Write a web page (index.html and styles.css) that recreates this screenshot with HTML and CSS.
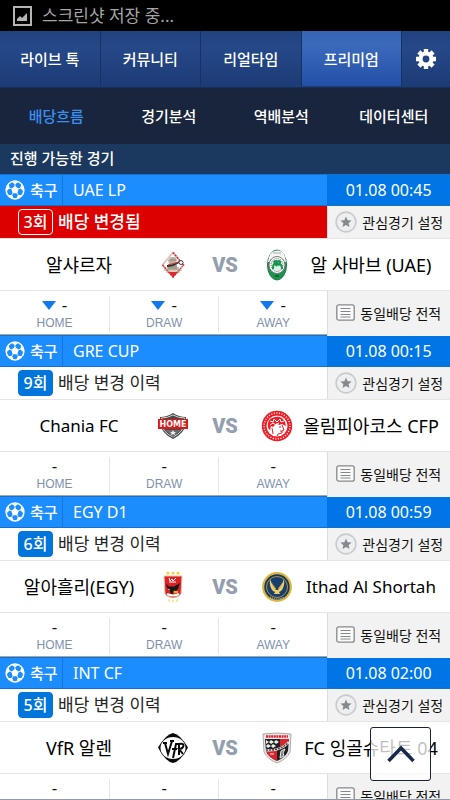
FILE: index.html
```html
<!DOCTYPE html>
<html lang="ko">
<head>
<meta charset="utf-8">
<meta name="viewport" content="width=device-width, initial-scale=1">
<title>배당흐름</title>
<link rel="stylesheet" href="styles.css">
</head>
<body>
<svg class="defs" aria-hidden="true">
  <symbol id="ball" viewBox="0 0 20 20">
    <circle cx="10" cy="10" r="8.9" fill="none" stroke="#fff" stroke-width="1.5"/>
    <path fill="#fff" d="M10 6.1l3.7 2.7-1.4 4.4H7.7L6.3 8.800zM6.300 1.800h7.400L10 4.300zM1 8.700l2.700-4.500 1 4.100-2.800 2.600zM19 8.700l-2.700-4.500-1 4.100 2.800 2.600zM3.200 14.900l4 .1 1.500 3.900-3.100-1zM16.800 14.900l-4 .1-1.500 3.900 3.100-1z"/>
    <path stroke="#fff" stroke-width=".9" d="M10 7V3.500M6.800 9L4 7.800M13.200 9L16 7.800M8 13l-1.500 2.500M12 13l1.500 2.500"/>
  </symbol>
  <symbol id="star" viewBox="0 0 22 22">
    <circle cx="11" cy="11" r="9.900" fill="#eeeff0" stroke="#c9cbcd" stroke-width="1.600"/>
    <path fill="#858990" d="M11 5.500l1.600 3.700 4 .4-3 2.600.9 3.900-3.500-2-3.500 2 .9-3.900-3-2.600 4-.4z"/>
  </symbol>
  <symbol id="list" viewBox="0 0 19 17">
    <rect x=".8" y=".8" width="17.400" height="15.400" rx="2" fill="#fafafa" stroke="#85888b" stroke-width="1.300"/>
    <path stroke="#85888b" d="M4.500 4.500h10M4.500 7.500h10M4.500 10.500h10M4.500 13h10"/>
  </symbol>
</svg>
<div class="app">
  <div class="status-bar">
    <svg width="19" height="20" viewBox="0 0 19 20"><rect x="1" y="1" width="17" height="18" fill="none" stroke="#b5b5b5" stroke-width="2"/><path fill="#b5b5b5" d="M4 15v-2l3-3 2 2 5-5v8z"/></svg>
    <span>스크린샷 저장 중...</span>
  </div>
  <nav class="main-nav">
    <a href="#">라이브 톡</a>
    <a href="#">커뮤니티</a>
    <a href="#">리얼타임</a>
    <a href="#" class="active">프리미엄</a>
    <button type="button" aria-label="설정">
      <svg width="20" height="20" viewBox="0 0 20 20"><circle cx="10" cy="10" r="5.500" fill="none" stroke="#fff" stroke-width="4.200"/><path stroke="#fff" stroke-width="4.400" d="M10 0v4M10 16v4M0 10h4M16 10h4M2.900 2.900l2.900 2.900M14.200 14.200l2.900 2.900M2.900 17.100l2.900-2.900M14.200 5.800l2.900-2.900"/></svg>
    </button>
  </nav>
  <nav class="sub-nav">
    <a href="#" class="active">배당흐름</a>
    <a href="#">경기분석</a>
    <a href="#">역배분석</a>
    <a href="#">데이터센터</a>
  </nav>
  <h1 class="section-title">진행 가능한 경기</h1>
  <main class="matches">

    <article class="match">
      <header class="split head">
        <div class="league"><span class="sport"><svg width="20" height="20"><use href="#ball"/></svg>축구</span><span>UAE LP</span></div>
        <time>01.08 00:45</time>
      </header>
      <div class="split change">
        <a href="#" class="history alert"><b>3회</b><span>배당 변경됨</span></a>
        <button type="button" class="side"><svg width="22" height="22"><use href="#star"/></svg>관심경기 설정</button>
      </div>
      <div class="teams">
        <span>알샤르자</span>
        <svg width="30" height="32" viewBox="0 0 30 32">
          <path d="M15 3.500L25.500 16 15 28 4.500 16z" fill="#fff" stroke="#ddb8b8" stroke-width="1.500"/>
          <path d="M15 3.500L25.500 16 24 18M4.500 16L15 28l8-9" fill="none" stroke="#dc2932" stroke-width="1.600" stroke-dasharray="2 1"/>
          <path d="M13 8h4l2 3-1 3 2 7H9l2-6-1-4z" fill="#b9b4a4"/>
          <path d="M12 11h6M10 17h9M9 19h12" stroke="#8c8776"/>
          <path d="M9 17q6 0 12-4" fill="none" stroke="#333" stroke-width="2"/><path d="M10 16l11-3" stroke="#c33"/>
          <path d="M6 21h18M8 23h14" stroke="#b59b83"/><path d="M10 23l5 5 5-5" fill="#dc2932"/>
          <circle cx="23" cy="13.500" r="2" fill="#fff" stroke="#444"/>
        </svg>
        <strong>VS</strong>
        <svg width="30" height="32" viewBox="0 0 30 32">
          <ellipse cx="15" cy="16" rx="9.500" ry="15" fill="#19954b" stroke="#24764a"/>
          <path d="M6 13Q7 2 15 1.500T24 13z" fill="#f6f8f6"/>
          <path d="M11 4h8" stroke="#aaa"/><ellipse cx="15" cy="16" rx="8" ry="8.500" fill="#fff" stroke="#777"/>
          <ellipse cx="15" cy="16" rx="6" ry="6.500" fill="#ddeee4" stroke="#777" stroke-dasharray="1 1"/>
          <path d="M11 20q0-8 4-3-5-5-1-5 1 0 1 4 0-4 2-4 3 1-1 4 4-2 4 4" fill="none" stroke="#17934a" stroke-width="2"/><path d="M13 27h4" stroke="#116332" stroke-width="2"/>
        </svg>
        <span>알 사바브 (UAE)</span>
      </div>
      <div class="split bottom">
        <dl class="odds">
          <div><dd><i class="down"></i>-</dd><dt>HOME</dt></div>
          <div><dd><i class="down"></i>-</dd><dt>DRAW</dt></div>
          <div><dd><i class="down"></i>-</dd><dt>AWAY</dt></div>
        </dl>
        <button type="button" class="side"><svg width="19" height="17"><use href="#list"/></svg>동일배당 전적</button>
      </div>
    </article>

    <article class="match">
      <header class="split head">
        <div class="league"><span class="sport"><svg width="20" height="20"><use href="#ball"/></svg>축구</span><span>GRE CUP</span></div>
        <time>01.08 00:15</time>
      </header>
      <div class="split change">
        <a href="#" class="history"><b>9회</b><span>배당 변경 이력</span></a>
        <button type="button" class="side"><svg width="22" height="22"><use href="#star"/></svg>관심경기 설정</button>
      </div>
      <div class="teams">
        <span class="latin">Chania FC</span>
        <svg width="30" height="32" viewBox="0 0 30 32">
          <path d="M2 7q7 0 13-4 6 4 13 4v6q-1 10-13 16Q3 23 2 13z" fill="#454a4d"/>
          <path d="M3.500 8q6 0 11.500-3Q20.500 8 26.500 8v5q-1 9-11.500 14Q4 22 3.500 13z" fill="none" stroke="#d2d4d5"/>
          <path d="M7 20h16l-8 7z" fill="#686d70"/><path d="M15 20l1 2h2l-1.500 1.300.5 2-2-1.200-2 1.200.5-2L12 22h2z" fill="#eee"/>
          <path d="M0 9h30v10H0z" fill="#df1717"/>
          <text x="15" y="17" text-anchor="middle" class="home-logo">HOME</text>
        </svg>
        <strong>VS</strong>
        <svg width="32" height="32" viewBox="0 0 32 32">
          <circle cx="16" cy="16" r="15.200" fill="#f01c24"/>
          <circle cx="16" cy="16" r="12.900" fill="none" stroke="#fff" stroke-width="1.500" stroke-dasharray="1 1.600"/>
          <circle cx="16" cy="16" r="10.500" fill="#fff"/>
          <path d="M7 17q-1-7 4-9 9-4 13 4l1 4-4-2-3 1-2-2-4 4-2-1-1 4q-2-1-2-3z" fill="#f01c24"/>
          <path d="M9 11l3 1 1-3 3 3 3-3 1 3 3-1M9 15l3-2 3 2 3-2" fill="none" stroke="#fff"/>
          <path d="M21 15l2 5-2 1v2l-4 1-1 2M11 18l1 6M18 17h2M19 21h2" fill="none" stroke="#f01c24"/>
        </svg>
        <span>올림피아코스 CFP</span>
      </div>
      <div class="split bottom">
        <dl class="odds">
          <div><dd>-</dd><dt>HOME</dt></div>
          <div><dd>-</dd><dt>DRAW</dt></div>
          <div><dd>-</dd><dt>AWAY</dt></div>
        </dl>
        <button type="button" class="side"><svg width="19" height="17"><use href="#list"/></svg>동일배당 전적</button>
      </div>
    </article>

    <article class="match">
      <header class="split head">
        <div class="league"><span class="sport"><svg width="20" height="20"><use href="#ball"/></svg>축구</span><span>EGY D1</span></div>
        <time>01.08 00:59</time>
      </header>
      <div class="split change">
        <a href="#" class="history"><b>6회</b><span>배당 변경 이력</span></a>
        <button type="button" class="side"><svg width="22" height="22"><use href="#star"/></svg>관심경기 설정</button>
      </div>
      <div class="teams">
        <span>알아흘리(EGY)</span>
        <svg width="30" height="32" viewBox="0 0 30 32">
          <path d="M10 0l.7 1.500h1.500L11 2.500l.5 1.500-1.500-1-1.500 1L9 2.500 7.800 1.500h1.500zM15 0l.7 1.500h1.500L16 2.500l.5 1.500-1.500-1-1.500 1 .5-1.500-1.200-1h1.500zM20 0l.7 1.500h1.500L21 2.500l.5 1.500-1.500-1-1.500 1 .5-1.500-1.200-1h1.500z" fill="#f5c928"/>
          <path d="M6 5h18l-1 18q-2 3-8 4-6-1-8-4z" fill="#dd2025" stroke="#dfc6a3"/>
          <path d="M11 7l1 3 2-2 1 2 3-3M11 11h7" fill="none" stroke="#fff"/>
          <path d="M8 13l4 3 2-1 1 1 7-4-2 6-4 4-3 1-1-3q-3-2-4-7z" fill="#17171b"/><path d="M16 20l4 1-4 1zM10 18l2 1" fill="#edb729" stroke="#edb729"/>
          <path d="M9 23q6 3 12 0" stroke="#fff" stroke-width="2" fill="none"/><path d="M10 29l2 1M14 30h2M18 30l2-1" stroke="#f8e58a" stroke-width="2"/>
        </svg>
        <strong>VS</strong>
        <svg width="30" height="32" viewBox="0 0 30 32">
          <circle cx="15" cy="16" r="13.800" fill="#163763" stroke="#dfb53a" stroke-width="2.200"/>
          <circle cx="15" cy="16" r="10.500" fill="#173d71" stroke="#a99245"/>
          <path d="M8 8q1 4 4 7 2 2 2 4h2q0-2 2-4 3-3 4-7 1 8-3 12l-2 1 1 2h-6l1-2-2-1Q7 16 8 8z" fill="#edcf65"/>
          <path d="M10 12q1 4 4 7M20 12q-1 4-4 7" fill="none" stroke="#a8842c" stroke-width=".6"/>
          <path d="M8 26q7 4 14 0" fill="none" stroke="#e9e4c8" stroke-dasharray="1 1"/>
        </svg>
        <span class="latin">Ithad Al Shortah</span>
      </div>
      <div class="split bottom">
        <dl class="odds">
          <div><dd>-</dd><dt>HOME</dt></div>
          <div><dd>-</dd><dt>DRAW</dt></div>
          <div><dd>-</dd><dt>AWAY</dt></div>
        </dl>
        <button type="button" class="side"><svg width="19" height="17"><use href="#list"/></svg>동일배당 전적</button>
      </div>
    </article>

    <article class="match">
      <header class="split head">
        <div class="league"><span class="sport"><svg width="20" height="20"><use href="#ball"/></svg>축구</span><span>INT CF</span></div>
        <time>01.08 02:00</time>
      </header>
      <div class="split change">
        <a href="#" class="history"><b>5회</b><span>배당 변경 이력</span></a>
        <button type="button" class="side"><svg width="22" height="22"><use href="#star"/></svg>관심경기 설정</button>
      </div>
      <div class="teams">
        <span>VfR 알렌</span>
        <svg width="30" height="32" viewBox="0 0 30 32">
          <path d="M15 1q4 1 7 4 5 5 8 10.500Q27 22 22 27q-3 3-7 4-4-1-7-4-5-5-8-11.500Q3 10 8 5q3-3 7-4z" fill="#090909"/>
          <ellipse cx="15" cy="16" rx="12.500" ry="11" fill="#fff"/>
          <path d="M5 11h4M7 11l3 11 4-13M12 9h4M21 12h-3l-3 14M14 17h5M21 23V12q6-1 4 3-1 2-4 2l4 5" fill="none" stroke="#090909" stroke-width="2"/>
        </svg>
        <strong>VS</strong>
        <svg width="30" height="32" viewBox="0 0 30 32">
          <path d="M1 2q14-2 28 0l-1 18q-3 7-13 11Q5 27 2 20z" fill="#e8e8e8" stroke="#aaa"/>
          <path d="M3 7h24l-1 12q-2 6-11 10Q6 25 4 19z" fill="#202022"/>
          <path d="M4 19l11-3v13Q6 25 4 19zM18 7h9l-1 5-8 5z" fill="#d9242c"/>
          <path d="M4 8l3 2-3 2zM9 8l3 2-3 2-2-2zM14 8l3 2-3 2-2-2zM6 12l3 2-3 2-2-2zM11 12l3 2-3 2-2-2z" fill="#eee"/>
          <path d="M3 18Q18 20 27 10" stroke="#ddd" stroke-width="2.400" fill="none"/><path d="M4 18q14 1 22-7" stroke="#444" stroke-width="1.300" stroke-dasharray="2 1" fill="none"/>
          <path d="M4 4.500h22" stroke="#d9242c" stroke-width="2.400" stroke-dasharray="2 .6"/><path d="M8 22h4M19 19l4-2-2 4 1 3-4 2z" stroke="#eee" fill="#777"/>
        </svg>
        <span>FC 잉골슈타트 04</span>
      </div>
      <div class="split bottom">
        <dl class="odds">
          <div><dd>-</dd><dt>HOME</dt></div>
          <div><dd>-</dd><dt>DRAW</dt></div>
          <div><dd>-</dd><dt>AWAY</dt></div>
        </dl>
        <button type="button" class="side"><svg width="19" height="17"><use href="#list"/></svg>동일배당 전적</button>
      </div>
    </article>
  </main>
</div>
<button type="button" class="to-top" aria-label="맨 위로">
  <svg width="28" height="18" viewBox="0 0 28 18"><path d="M1.500 16L14 3l12.500 13" fill="none" stroke="#17294a" stroke-width="3.500"/></svg>
</button>
</body>
</html>
```
FILE: styles.css
```css
* { box-sizing: border-box; }

body {
  margin: 0;
  background: #fff;
  color: #111;
  font-family: "Noto Sans", "Noto Sans CJK KR", sans-serif;
  font-size: 15px;
}

a { color: inherit; text-decoration: none; }
svg { display: block; flex: none; }
button {
  margin: 0;
  padding: 0;
  border: 0;
  background: none;
  color: inherit;
  font: inherit;
}
.defs { position: absolute; width: 0; height: 0; }

.app {
  display: flex;
  flex-direction: column;
  height: 100vh;
  border-bottom: 1px solid #9298a5;
}

.status-bar {
  display: flex;
  flex: none;
  align-items: center;
  gap: 10px;
  height: 31px;
  padding-left: 13px;
  background: #000;
  color: #a5a5a5;
  font-size: 17px;
  line-height: 28px;
}

.main-nav {
  display: flex;
  flex: none;
  height: 57px;
  padding-bottom: 1px;
  background: linear-gradient(#20427f, #254889 30%, #1d3b75);
  border-bottom: 1px solid #192e56;
  color: #fff;
  font-weight: 500;
}
.main-nav a {
  display: flex;
  flex: 1;
  align-items: center;
  justify-content: center;
  border-right: 1px solid #1a305f;
}
.main-nav a.active { background: linear-gradient(#3564b3, #3b6abc 25%, #2250a7); }
.main-nav button {
  display: flex;
  width: 48px;
  align-items: center;
  justify-content: center;
}

.sub-nav {
  display: flex;
  flex: none;
  height: 56px;
  padding-bottom: 2px;
  background: #19253d;
  color: #fff;
  font-weight: 500;
}
.sub-nav a {
  display: flex;
  flex: 1;
  align-items: center;
  justify-content: center;
}
.sub-nav a.active { color: #3b8ff0; }

.section-title {
  flex: none;
  height: 30px;
  margin: 0;
  padding-left: 10px;
  background: #1b395f;
  color: #fff;
  font-size: 15px;
  font-weight: 500;
  line-height: 29px;
}

.matches {
  flex: 1;
  min-height: 0;
  overflow-y: auto;
  scrollbar-width: none;
}
.match { border-bottom: 1px solid #a5a8a5; }
.split { display: grid; grid-template-columns: 8fr 3fr; }

.head {
  height: 32px;
  border-top: 1px solid #1770cc;
  border-bottom: 1px solid #1770cc;
  background: #1c8dff;
  color: #fff;
  font-size: 16px;
  line-height: 30px;
}
.league { display: flex; gap: 10px; }
.sport {
  display: flex;
  align-items: center;
  gap: 5px;
  width: 63px;
  padding-left: 5px;
  border-right: 1px solid #1775d5;
  font-size: 15px;
  font-weight: 500;
}
.head time {
  background: #0075e5;
  text-align: center;
}

.change {
  height: 33px;
  border-bottom: 1px solid #e5e5e5;
}
.history {
  display: flex;
  align-items: center;
  gap: 5px;
  padding-left: 18px;
  color: #252525;
  font-size: 17px;
  line-height: 24px;
}
.history b {
  width: 35px;
  border: 1px solid #0075dc;
  border-radius: 4px;
  background: #0075dc;
  color: #fff;
  font-size: 16px;
  font-weight: 500;
  text-align: center;
}
.history.alert { background: #dc0000; color: #fff; font-weight: 500; }
.history.alert b { border-color: #fff; background: transparent; }

.side {
  display: flex;
  align-items: center;
  gap: 5px;
  padding-left: 7px;
  border-left: 1px solid #dedede;
  background: #f2f2f2;
  font-size: 14px;
  white-space: nowrap;
}

.teams {
  display: grid;
  grid-template-columns: 1fr 30px 74px 30px 1fr;
  align-items: center;
  justify-items: center;
  height: 52px;
  border-bottom: 1px solid #e5e5e5;
  color: #000;
  font-size: 18px;
  line-height: 24px;
  white-space: nowrap;
}
.teams .latin { font-size: 17px; }
.teams strong {
  color: #939eaf;
  font-family: Roboto, "Liberation Sans", sans-serif;
  font-size: 20px;
  font-weight: 900;
}
.home-logo {
  fill: #fff;
  font: 700 8px "DejaVu Sans", sans-serif;
}

.bottom { height: 43px; }
.bottom .side {
  padding-bottom: 3px;
  padding-left: 8px;
}
.odds {
  display: grid;
  grid-template-columns: repeat(3, 1fr);
  margin: 0;
  padding: 5px 0;
}
.odds div { text-align: center; }
.odds div + div { border-left: 1px solid #e5e5e5; }
.odds dd {
  display: flex;
  align-items: center;
  justify-content: center;
  gap: 6px;
  height: 18px;
  margin: 0;
  font-size: 17px;
  line-height: 16px;
}
.odds dt {
  color: #7e91ab;
  font-family: "Liberation Sans", sans-serif;
  font-size: 12px;
  line-height: 18px;
}
.down {
  border: 7px solid transparent;
  border-top: 9px solid #1279ed;
  border-bottom: 0;
}

.to-top {
  position: fixed;
  right: 19px;
  bottom: 19px;
  display: flex;
  align-items: center;
  justify-content: center;
  width: 61px;
  height: 54px;
  border: 1px solid #1a2235;
  border-radius: 3px;
  background: rgba(255, 255, 255, 0.75);
}
```
